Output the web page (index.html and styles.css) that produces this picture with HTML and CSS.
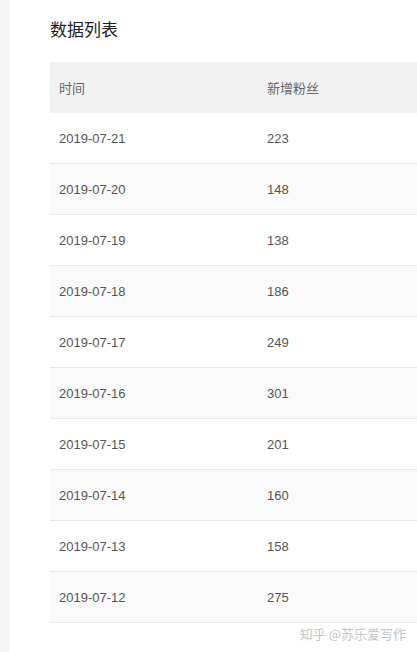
FILE: index.html
```html
<!DOCTYPE html>
<html lang="zh">
<head>
<meta charset="utf-8">
<link rel="stylesheet" href="styles.css">
</head>
<body>
<div class="page">
  <div class="side"></div>
  <main class="main">
    <h2 class="title">数据列表</h2>
    <div class="table">
      <div class="row head"><div class="c1">时间</div><div class="c2">新增粉丝</div></div>
      <div class="row"><div class="c1">2019-07-21</div><div class="c2">223</div></div>
      <div class="row alt"><div class="c1">2019-07-20</div><div class="c2">148</div></div>
      <div class="row"><div class="c1">2019-07-19</div><div class="c2">138</div></div>
      <div class="row alt"><div class="c1">2019-07-18</div><div class="c2">186</div></div>
      <div class="row"><div class="c1">2019-07-17</div><div class="c2">249</div></div>
      <div class="row alt"><div class="c1">2019-07-16</div><div class="c2">301</div></div>
      <div class="row"><div class="c1">2019-07-15</div><div class="c2">201</div></div>
      <div class="row alt"><div class="c1">2019-07-14</div><div class="c2">160</div></div>
      <div class="row"><div class="c1">2019-07-13</div><div class="c2">158</div></div>
      <div class="row alt"><div class="c1">2019-07-12</div><div class="c2">275</div></div>
    </div>
    <div class="mark">知乎 @苏乐爱写作</div>
  </main>
</div>
</body>
</html>
```
FILE: styles.css
```css
html, body {
  margin: 0;
  padding: 0;
  background: #fff;
  font-family: "Liberation Sans", Arial, "Noto Sans CJK SC", sans-serif;
}
.page {
  display: flex;
  width: 417px;
  height: 652px;
  overflow: hidden;
}
.side {
  width: 8px;
  flex: none;
  background: #f6f6f6;
  border-right: 1px solid #efefef;
}
.main {
  flex: 1;
  padding-left: 41px;
  min-width: 0;
}
.title {
  margin: 0;
  padding-top: 19px;
  height: 62px;
  box-sizing: border-box;
  font-size: 17px;
  font-weight: normal;
  color: #222;
  line-height: 20px;
  font-family: "Noto Sans CJK SC", sans-serif;
}
.table {
  width: 420px;
}
.row {
  display: flex;
  height: 51px;
  align-items: center;
  border-bottom: 1px solid #e8e8e8;
  box-sizing: border-box;
  font-size: 13px;
  color: #555;
  background: #fff;
}
.row.alt {
  background: #fafafa;
}
.row.head {
  background: #f2f2f2;
  border-bottom: none;
  color: #666;
  font-family: "Noto Sans CJK SC", sans-serif;
}
.c1 {
  width: 208px;
  padding-left: 9px;
  flex: none;
}
.c2 {
  flex: 1;
}
.mark {
  text-align: right;
  padding-right: 11px;
  padding-top: 1px;
  font-size: 13px;
  color: #c4c4c4;
  font-family: "Noto Sans CJK SC", sans-serif;
}
```
